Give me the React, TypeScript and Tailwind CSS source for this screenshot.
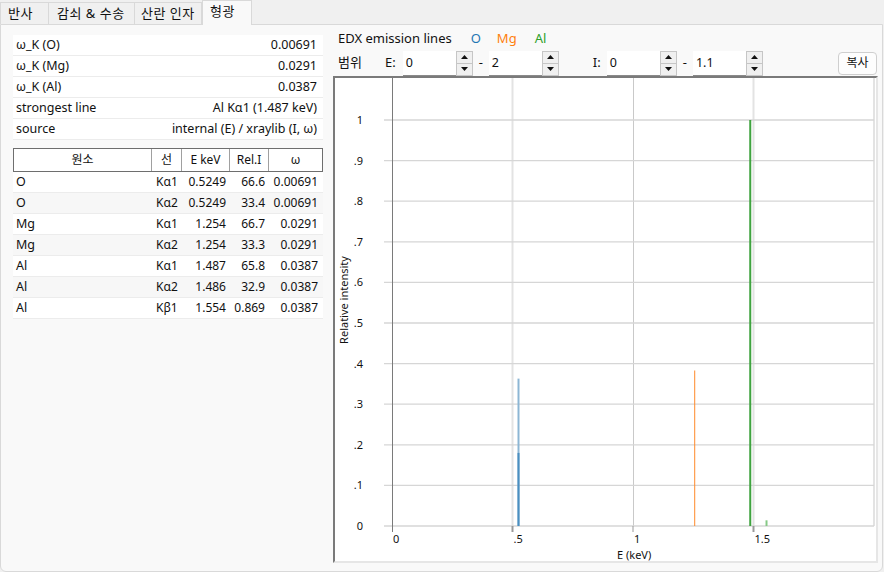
import React from "react";

const props = [
  ["ω_K (O)", "0.00691"],
  ["ω_K (Mg)", "0.0291"],
  ["ω_K (Al)", "0.0387"],
  ["strongest line", "Al Kα1 (1.487 keV)"],
  ["source", "internal (E) / xraylib (I, ω)"],
];

const lines = [
  ["O", "Kα1", "0.5249", "66.6", "0.00691"],
  ["O", "Kα2", "0.5249", "33.4", "0.00691"],
  ["Mg", "Kα1", "1.254", "66.7", "0.0291"],
  ["Mg", "Kα2", "1.254", "33.3", "0.0291"],
  ["Al", "Kα1", "1.487", "65.8", "0.0387"],
  ["Al", "Kα2", "1.486", "32.9", "0.0387"],
  ["Al", "Kβ1", "1.554", "0.869", "0.0387"],
];

const X0 = 57;
const XS = 241;
const Y0 = 448;
const YS = 406;
const xOf = (e: number) => X0 + XS * e;
const yOf = (v: number) => Y0 - YS * v;

function Spin({ value }: { value: string }) {
  return (
    <div className="flex items-stretch h-[25px]">
      <div className="w-[53px] bg-white border-b border-[#8a8a8a] pl-[3px] pt-[3px] text-[12.5px]">{value}</div>
      <div className="flex flex-col w-[17px]">
        <div className="flex-1 bg-[#f0f0f0] border border-[#c6c6c6] flex items-center justify-center">
          <svg width="7" height="4" viewBox="0 0 7 4"><path d="M0 4 L3.5 0 L7 4 Z" fill="#111" /></svg>
        </div>
        <div className="flex-1 bg-[#f0f0f0] border border-t-0 border-[#c6c6c6] flex items-center justify-center">
          <svg width="7" height="4" viewBox="0 0 7 4"><path d="M0 0 L3.5 4 L7 0 Z" fill="#111" /></svg>
        </div>
      </div>
    </div>
  );
}

function Chart() {
  const yTicks = [0, 0.1, 0.2, 0.3, 0.4, 0.5, 0.6, 0.7, 0.8, 0.9, 1];
  const yLab = ["0", ".1", ".2", ".3", ".4", ".5", ".6", ".7", ".8", ".9", "1"];
  return (
    <svg width="543" height="485" className="block">
      {/* grid */}
      <line x1={xOf(0.5)} y1="0" x2={xOf(0.5)} y2={Y0} stroke="#e3e3e3" strokeWidth="2" />
      <line x1={xOf(1) + 0.5} y1="0" x2={xOf(1) + 0.5} y2={Y0} stroke="#c9c9c9" strokeWidth="1" />
      <line x1={xOf(1.5)} y1="0" x2={xOf(1.5)} y2={Y0} stroke="#e3e3e3" strokeWidth="2" />
      <line x1={xOf(2)} y1="0" x2={xOf(2)} y2={Y0} stroke="#e3e3e3" strokeWidth="2" />
      {yTicks.map((v, i) => (
        <g key={v}>
          <line x1={X0 - 8} y1={yOf(v)} x2={xOf(2)} y2={yOf(v)} stroke="#d6d6d6" strokeWidth="1.3" />
          <text x="28" y={yOf(v) + 4} textAnchor="end" fontSize="11" fill="#111">{yLab[i]}</text>
        </g>
      ))}
      {[0, 0.5, 1, 1.5].map((e, i) => (
        <g key={e}>
          <line x1={xOf(e) + (i === 0 ? 0.5 : 0)} y1={Y0} x2={xOf(e) + (i === 0 ? 0.5 : 0)} y2={Y0 + 6} stroke="#9a9a9a" strokeWidth={i % 2 ? 2 : 1} />
          <text x={xOf(e) + 1} y={Y0 + 17} fontSize="11" fill="#111">{["0", ".5", "1", "1.5"][i]}</text>
        </g>
      ))}
      <line x1={X0 + 0.5} y1="0" x2={X0 + 0.5} y2={Y0 + 6} stroke="#7a7a7a" strokeWidth="1" />
      {/* O */}
      <line x1={xOf(0.5249)} y1={yOf(0.363)} x2={xOf(0.5249)} y2={Y0} stroke="#8cb6d4" strokeWidth="2" />
      <line x1={xOf(0.5249)} y1={yOf(0.18)} x2={xOf(0.5249)} y2={Y0} stroke="#4a8fc1" strokeWidth="2" />
      {/* Mg */}
      <line x1={xOf(1.254) + 0.5} y1={yOf(0.383)} x2={xOf(1.254) + 0.5} y2={Y0} stroke="#ff8a2a" strokeWidth="1" />
      {/* Al */}
      <line x1={xOf(1.4865)} y1={yOf(1)} x2={xOf(1.4865)} y2={Y0} stroke="#3fa33f" strokeWidth="2" />
      <line x1={xOf(1.554)} y1={yOf(0.014)} x2={xOf(1.554)} y2={Y0} stroke="#86c986" strokeWidth="2" />
      <text x="282" y="481" fontSize="11" fill="#111">E (keV)</text>
      <text x="0" y="0" fontSize="11" fill="#111" textAnchor="middle" transform="translate(13 222) rotate(-90)">Relative intensity</text>
    </svg>
  );
}

export default function App() {
  return (
    <div
      className="w-[884px] h-[572px] bg-[#f0f0f0] text-[12px] text-[#111] flex flex-col"
      style={{ fontFamily: '"Noto Sans", "Noto Sans CJK KR", sans-serif' }}
    >
      {/* tabs */}
      <div className="flex items-end h-[24px] text-[13px] tracking-[0.5px]">
        <div className="w-[49px] h-[22px] border border-b-0 border-[#d9d9d9] pl-[7px] leading-[20px]">반사</div>
        <div className="w-[86px] h-[22px] border border-l-0 border-b-0 border-[#d9d9d9] pl-[8px] leading-[20px]">감쇠 &amp; 수송</div>
        <div className="w-[67px] h-[22px] border border-l-0 border-b-0 border-[#d9d9d9] pl-[6px] leading-[20px]">산란 인자</div>
        <div className="w-[50px] h-[25px] bg-[#f9f9f9] border border-b-0 border-[#d9d9d9] pl-[7px] leading-[21px] -mb-[1px] relative z-10">형광</div>
      </div>

      {/* panel */}
      <div className="flex-1 mr-[1px] bg-[#f9f9f9] border border-[#d9d9d9] rounded-b-[6px] flex">
        {/* left */}
        <div className="w-[310px] ml-[12px] mt-[10px] flex flex-col">
          <div className="flex flex-col text-[12.5px]">
            {props.map(([k, v]) => (
              <div key={k} className="h-[21px] bg-white border-b border-[#ececec] flex items-center justify-between px-[3px] pr-[6px]">
                <span>{k}</span>
                <span>{v}</span>
              </div>
            ))}
          </div>
          <div className="mt-[8px] flex flex-col">
            <div className="h-[24px] bg-white border border-[#6e6e6e] flex">
              <div className="w-[138px] border-r border-[#a0a0a0] flex items-center justify-center">원소</div>
              <div className="w-[30px] border-r border-[#a0a0a0] flex items-center justify-center">선</div>
              <div className="w-[48px] border-r border-[#a0a0a0] flex items-center justify-center">E keV</div>
              <div className="w-[39px] border-r border-[#a0a0a0] flex items-center justify-center">Rel.I</div>
              <div className="flex-1 flex items-center justify-center">ω</div>
            </div>
            {lines.map((r, i) => (
              <div key={i} className={`h-[21px] flex items-center border-b border-[#ececec] ${i % 2 ? "bg-[#f7f7f7]" : "bg-white"}`}>
                <div className="w-[139px] pl-[3px] text-[12.5px]">{r[0]}</div>
                <div className="w-[30px] pl-[4px]">{r[1]}</div>
                <div className="w-[48px] text-right pr-[4px]">{r[2]}</div>
                <div className="w-[39px] text-right pr-[4px]">{r[3]}</div>
                <div className="flex-1 text-right pr-[5px]">{r[4]}</div>
              </div>
            ))}
          </div>
        </div>

        {/* right */}
        <div className="w-[545px] ml-[10px] flex flex-col">
          <div className="h-[25px] flex items-center pl-[5px] text-[13px] pt-[2px]">
            <span>EDX emission lines</span>
            <span className="ml-[19px] text-[#1f77b4]">O</span>
            <span className="ml-[16px] text-[#ff7f0e]">Mg</span>
            <span className="ml-[18px] text-[#2ca02c]">Al</span>
          </div>
          <div className="h-[26px] flex items-center pl-[5px] text-[13px]">
            <span>범위</span>
            <span className="ml-[23px] mr-[7px]">E:</span>
            <Spin value="0" />
            <span className="mx-[6px]">-</span>
            <Spin value="2" />
            <span className="ml-[34px] mr-[6px]">I:</span>
            <Spin value="0" />
            <span className="mx-[6px]">-</span>
            <Spin value="1.1" />
            <div className="ml-auto mr-[1px] w-[39px] h-[23px] rounded-[4px] border border-[#cfcfcf] bg-[#fdfdfd] flex items-center justify-center text-[12px]">복사</div>
          </div>
          <div className="h-[487px] bg-white border-2 border-t-[#7a7a7a] border-l-[#7a7a7a] border-r-[#e6e6e6] border-b-[#e6e6e6]">
            <Chart />
          </div>
        </div>
      </div>
    </div>
  );
}
